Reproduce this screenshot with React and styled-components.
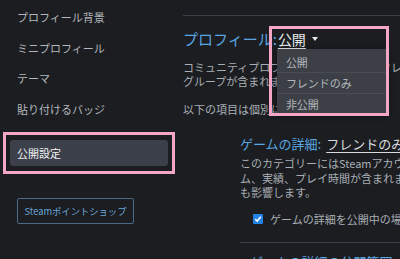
import React from 'react';
import styled, { createGlobalStyle } from 'styled-components';

const GlobalStyle = createGlobalStyle`
  html, body {
    margin: 0;
    padding: 0;
    background: #1b1d21;
  }
  body {
    font-family: 'Noto Sans CJK JP', 'Noto Sans', sans-serif;
  }
`;

const Page = styled.div`
  display: flex;
  width: 400px;
  height: 259px;
  overflow: hidden;
  background: #1b1d21;
`;

// 왼쪽 메뉴
const Sidebar = styled.nav`
  flex: none;
  width: 183px;
  padding-top: 2px;
  display: flex;
  flex-direction: column;
`;

const NavItem = styled.div`
  height: 30.5px;
  line-height: 30.5px;
  padding-left: 17px;
  font-size: 11px;
  color: #b4b8bc;
  white-space: nowrap;
`;

// 분홍색 강조 테두리
const HighlightFrame = styled.div`
  margin: 8px 0 0 3px;
  width: 172px;
  box-sizing: border-box;
  border: 3px solid #f3a6c6;
  padding: 5px 4px;
`;

const ActiveItem = styled.div`
  height: 26px;
  line-height: 26px;
  padding-left: 7px;
  border-radius: 3px;
  background: #3b404b;
  color: #f2f2f2;
  font-size: 11px;
`;

const ShopButton = styled.button`
  align-self: flex-start;
  margin: 24px 0 0 17px;
  width: 117px;
  height: 26px;
  padding: 0;
  background: transparent;
  border: 1px solid #4c6a88;
  border-radius: 2px;
  color: #6aa6d8;
  font-family: inherit;
  font-size: 9.3px;
`;

const Main = styled.main`
  flex: 1;
  min-width: 0;
  margin-top: 15px;
  border-top: 1px solid #393d44;
`;

const Title = styled.div`
  margin-top: 12px;
  height: 22px;
  line-height: 22px;
  font-size: 15px;
  color: #5aa6e0;
  white-space: nowrap;
  display: flex;
  align-items: center;
`;

const Text = styled.div`
  margin-top: ${p => p.$gap || 0}px;
  font-size: 11px;
  line-height: ${p => p.$lh || 14}px;
  color: #a9aeb4;
  white-space: nowrap;
`;

const DropdownWrap = styled.span`
  position: relative;
  margin-left: 1px;
  display: inline-flex;
  align-items: center;
`;

const Current = styled.span`
  color: #e6e8ea;
  font-size: 14px;
  text-decoration: underline;
  text-underline-offset: 3px;
`;

const Caret = styled.span`
  margin-left: 6px;
  width: 0;
  height: 0;
  border-left: 3px solid transparent;
  border-right: 3px solid transparent;
  border-top: 4px solid #e6e8ea;
`;

const Menu = styled.div`
  position: absolute;
  top: 21px;
  left: -1px;
  width: 110px;
  padding-top: 3px;
  background: #3c3f46;
  box-shadow: 0 2px 6px rgba(0, 0, 0, 0.5);
  z-index: 2;
`;

const MenuItem = styled.div`
  height: 20px;
  line-height: 20px;
  padding-left: 9px;
  font-size: 11px;
  color: #b3b7bb;
  & + & {
    border-top: 1px solid #484c53;
  }
`;

const DropdownFrame = styled.div`
  position: absolute;
  top: -2px;
  left: -9px;
  width: 120px;
  height: 90px;
  box-sizing: border-box;
  border: 3px solid #f3a6c6;
  z-index: 3;
  pointer-events: none;
`;

const Section = styled.section`
  margin: 19px 0 0 57px;
`;

const SectionTitle = styled.div`
  height: 18px;
  line-height: 18px;
  font-size: 13px;
  color: #5aa6e0;
  white-space: nowrap;
  span {
    margin-left: 5px;
    color: #d8dbde;
    text-decoration: underline;
    text-underline-offset: 3px;
  }
`;

const CheckRow = styled.label`
  margin: 12px 0 0 13px;
  display: flex;
  align-items: center;
  gap: 7px;
  font-size: 11px;
  line-height: 14px;
  color: #a9aeb4;
  white-space: nowrap;
`;

const CheckBox = styled.span`
  flex: none;
  width: 10px;
  height: 10px;
  border-radius: 1px;
  background: #2183e6;
  display: flex;
  align-items: center;
  justify-content: center;
`;

const Divider = styled.div`
  margin-top: 16px;
  border-top: 1px solid #3c4048;
`;

const NextTitle = styled(SectionTitle)`
  margin: 10px 0 0 10px;
`;

const App = () => {
  return (
    <>
      <GlobalStyle />
      <Page>
        <Sidebar>
          <NavItem>プロフィール背景</NavItem>
          <NavItem>ミニプロフィール</NavItem>
          <NavItem>テーマ</NavItem>
          <NavItem>貼り付けるバッジ</NavItem>
          <HighlightFrame>
            <ActiveItem>公開設定</ActiveItem>
          </HighlightFrame>
          <ShopButton>Steamポイントショップ</ShopButton>
        </Sidebar>
        <Main>
          <Title>
            プロフィール:
            <DropdownWrap>
              <Current>公開</Current>
              <Caret />
              <Menu>
                <MenuItem>公開</MenuItem>
                <MenuItem>フレンドのみ</MenuItem>
                <MenuItem>非公開</MenuItem>
              </Menu>
              <DropdownFrame />
            </DropdownWrap>
          </Title>
          <Text $gap={10}>
            コミュニティプロフィールには、概要、フレンド、バッジ、レベル、
            <br />
            グループが含まれます。
          </Text>
          <Text $gap={14}>以下の項目は個別に設定できます。</Text>
          <Section>
            <SectionTitle>
              ゲームの詳細:<span>フレンドのみ</span>
            </SectionTitle>
            <Text $gap={3} $lh={14.5}>
              このカテゴリーにはSteamアカウントで所有しているゲー
              <br />
              ム、実績、プレイ時間が含まれます。この設定は
              <br />
              も影響します。
            </Text>
            <CheckRow>
              <CheckBox>
                <svg width="8" height="8" viewBox="0 0 8 8">
                  <path d="M1.2 4.2 L3.2 6 L6.8 1.8" fill="none" stroke="#fff" strokeWidth="1.6" />
                </svg>
              </CheckBox>
              ゲームの詳細を公開中の場合でも、プレイ時間は常に非公開にする
            </CheckRow>
            <Divider />
            <NextTitle>
              ゲームの詳細の公開範囲
            </NextTitle>
          </Section>
        </Main>
      </Page>
    </>
  );
};

export default App;
